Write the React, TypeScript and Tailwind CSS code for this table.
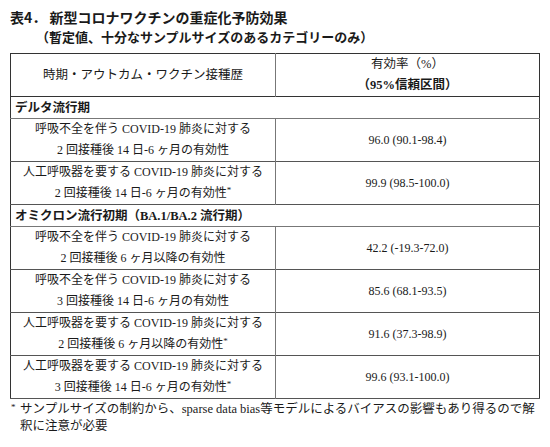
const periods = [
  {
    label: 'デルタ流行期',
    rows: [
      { l1: '呼吸不全を伴う COVID-19 肺炎に対する', l2: '2 回接種後 14 日-6 ヶ月の有効性', mark: false, value: '96.0 (90.1-98.4)' },
      { l1: '人工呼吸器を要する COVID-19 肺炎に対する', l2: '2 回接種後 14 日-6 ヶ月の有効性', mark: true, value: '99.9 (98.5-100.0)' },
    ],
  },
  {
    label: 'オミクロン流行初期（BA.1/BA.2 流行期）',
    rows: [
      { l1: '呼吸不全を伴う COVID-19 肺炎に対する', l2: '2 回接種後 6 ヶ月以降の有効性', mark: false, value: '42.2 (-19.3-72.0)' },
      { l1: '呼吸不全を伴う COVID-19 肺炎に対する', l2: '3 回接種後 14 日-6 ヶ月の有効性', mark: false, value: '85.6 (68.1-93.5)' },
      { l1: '人工呼吸器を要する COVID-19 肺炎に対する', l2: '2 回接種後 6 ヶ月以降の有効性', mark: true, value: '91.6 (37.3-98.9)' },
      { l1: '人工呼吸器を要する COVID-19 肺炎に対する', l2: '3 回接種後 14 日-6 ヶ月の有効性', mark: true, value: '99.6 (93.1-100.0)' },
    ],
  },
]

export default function App() {
  return (
    <main className="w-[550px] h-[447px] bg-white text-[#1a1a1a] font-['Liberation_Serif','Noto_Sans_CJK_JP',serif]">
      {/* タイトル */}
      <div className="pt-[7px] pl-[10px] font-['Noto_Sans_CJK_JP',sans-serif] font-bold">
        <p className="text-[14px] leading-[20px]">表4． 新型コロナワクチンの重症化予防効果</p>
        <p className="text-[13px] leading-[20px] pl-[26px]">（暫定値、十分なサンプルサイズのあるカテゴリーのみ）</p>
      </div>

      {/* 表 */}
      <div className="px-[10px] pt-[6px]">
        <table className="w-[529px] border-collapse border border-[#333] table-fixed">
          <colgroup>
            <col className="w-[265px]" />
            <col className="w-[264px]" />
          </colgroup>
          <thead>
            <tr className="h-[43px] border-b border-[#333]">
              <th className="border-r border-[#777] font-normal text-[12.5px] text-center">時期・アウトカム・ワクチン接種歴</th>
              <th className="text-[12.5px] leading-[21px] text-center">
                <div className="font-normal">有効率（%）</div>
                <div className="font-bold">（95%信頼区間）</div>
              </th>
            </tr>
          </thead>
          <tbody>
            {periods.map((p) => (
              <>
                <tr key={p.label} className="h-[22px] border-b border-[#777]">
                  <td colSpan={2} className="pl-[4px] text-[12.5px] font-bold leading-[18px]">{p.label}</td>
                </tr>
                {p.rows.map((r, i) => (
                  <tr key={p.label + i} className="h-[43px] border-b border-[#555]">
                    <td className="border-r border-[#777] text-center text-[12px] leading-[21px]">
                      <div>{r.l1}</div>
                      <div>
                        {r.l2}
                        {r.mark && <sup className="text-[9px]">*</sup>}
                      </div>
                    </td>
                    <td className="text-center text-[12px]">{r.value}</td>
                  </tr>
                ))}
              </>
            ))}
          </tbody>
        </table>
      </div>

      {/* 注記 */}
      <div className="flex pl-[11px] pr-[10px] pt-[2px] text-[12.5px] leading-[17px]">
        <span className="text-[9px] leading-[12px] w-[9px] shrink-0">*</span>
        <p>サンプルサイズの制約から、sparse data bias等モデルによるバイアスの影響もあり得るので解釈に注意が必要</p>
      </div>
    </main>
  )
}
